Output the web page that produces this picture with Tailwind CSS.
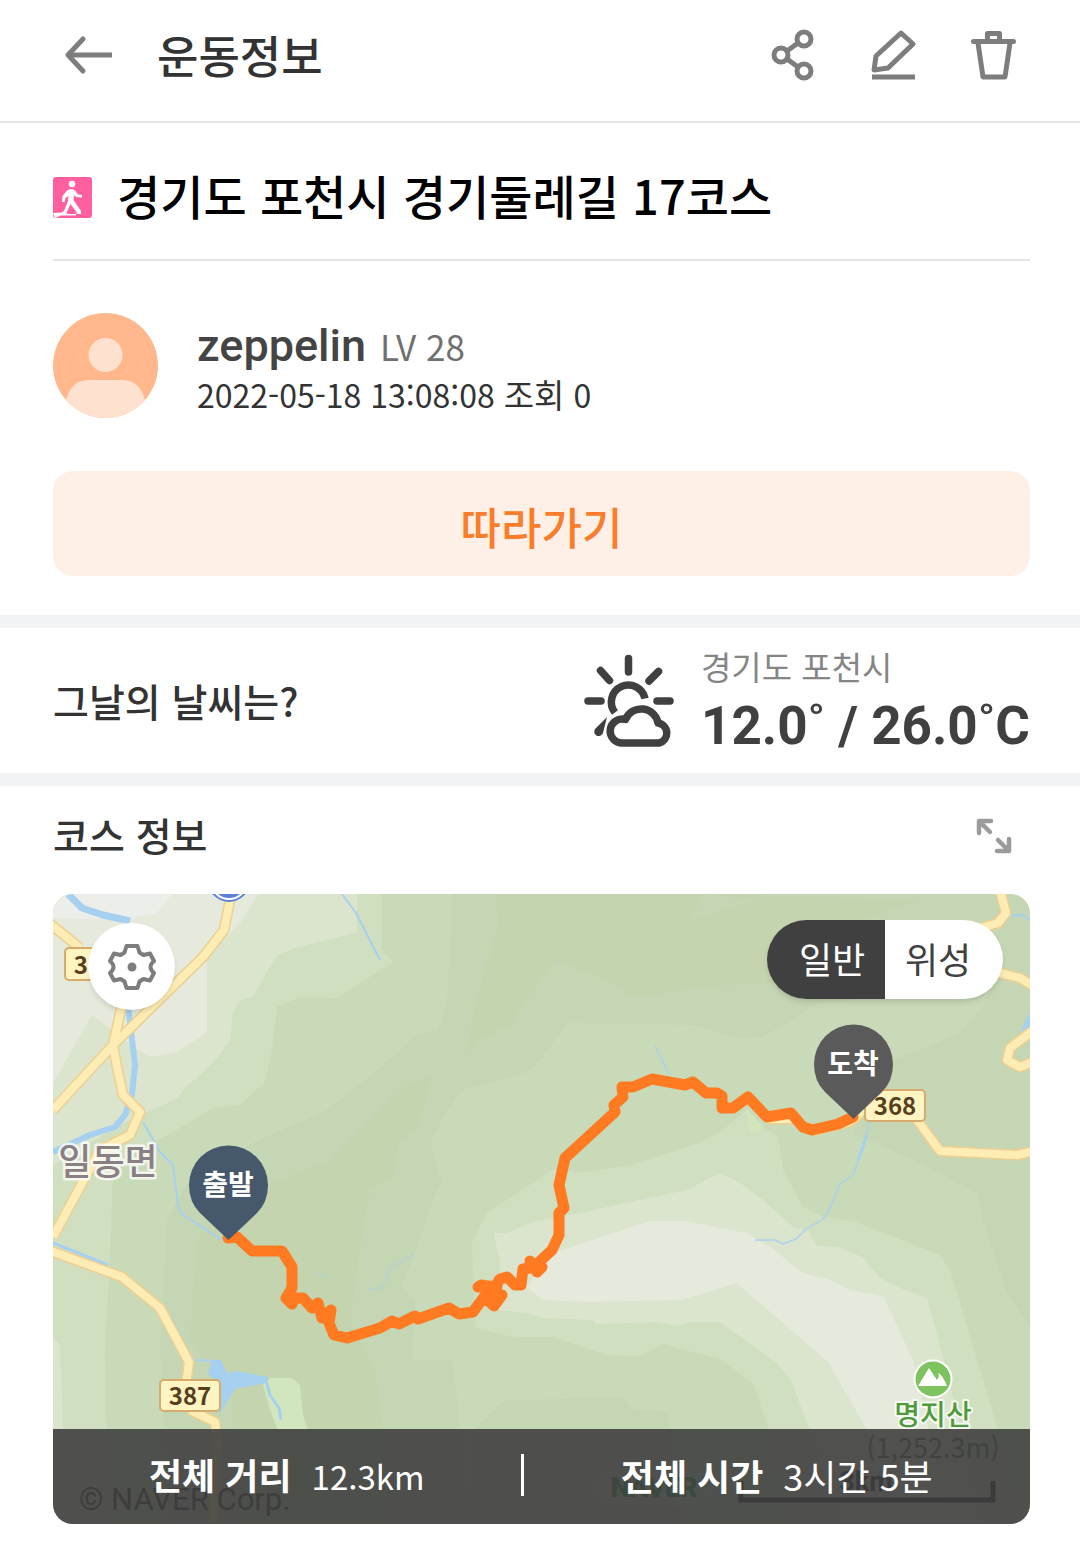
<!DOCTYPE html>
<html lang="ko">
<head>
<meta charset="UTF-8" />
<meta name="viewport" content="width=device-width, initial-scale=1" />
<title>운동정보</title>
<script src="https://cdn.jsdelivr.net/npm/@tailwindcss/browser@4"></script>
</head>
<body class="bg-white text-[#333] font-['Noto_Sans_CJK_KR',sans-serif]">

<header class="flex items-center h-[123px] pl-[64px] pr-[58px] pb-3 border-b-2 border-[#e5e5e5]">
  <button aria-label="뒤로" class="shrink-0">
    <svg class="w-12 h-12" viewBox="0 0 48 48" fill="none" stroke="#7d7d7d" stroke-width="5" stroke-linejoin="round">
      <path d="M48 24H4" /><path d="M19 8L4 24l15 16" stroke-linecap="round" />
    </svg>
  </button>
  <h1 class="ml-[45px] text-[45px] leading-[56px] font-medium">운동정보</h1>
  <div class="ml-auto flex gap-[44px]">
    <button aria-label="공유">
      <svg class="w-14 h-14" viewBox="0 0 56 56" fill="none" stroke="#7d7d7d" stroke-width="5">
        <circle cx="38" cy="12" r="7" /><circle cx="15" cy="28" r="7" /><circle cx="38" cy="44" r="7" />
        <path d="M32 16L21 24M21 32l11 8" />
      </svg>
    </button>
    <button aria-label="수정">
      <svg class="w-14 h-14" viewBox="0 0 56 56" fill="none" stroke="#7d7d7d" stroke-width="5" stroke-linejoin="round">
        <path d="M35 6L47 17L22 41L8 43L10 29Z" /><path d="M6 50h43" />
      </svg>
    </button>
    <button aria-label="삭제">
      <svg class="w-14 h-14" viewBox="0 0 56 56" fill="none" stroke="#7d7d7d" stroke-width="5" stroke-linejoin="round">
        <path d="M7.500 14.500h40" stroke-linecap="round" /><path d="M21.500 14V6.500h12V14M12 16l5 34h22l5-34" />
      </svg>
    </button>
  </div>
</header>

<main>
  <section class="pl-[53px] pr-[50px] pb-[39px]">
    <div class="flex items-center gap-[25px] h-[138px] pt-3 border-b-2 border-[#e5e5e5]">
      <svg class="w-[39px] h-[41px] shrink-0" viewBox="0 0 39 41" fill="#fff" role="img" aria-label="걷기">
        <rect width="39" height="41" rx="3" fill="#ff5f9e" />
        <circle cx="19" cy="7" r="3.300" />
        <path d="M14 13.500q4-3 8 0l3 4 4 .5v2.500l-6-.5-2-2-.5 5L28 34v3h-4.500v-2l-6-8L13 37H9v-2l2-1 4-10 .5-5-3 2-1 4H9l.5-6z" />
        <path d="M0 36l9-.5 7 1.500h7v1.500H8L2 41z" />
      </svg>
      <h2 class="pb-1 text-[47px] leading-[60px] font-medium text-black">경기도 포천시 경기둘레길 17코스</h2>
    </div>

    <div class="flex items-center gap-[39px] mt-[52px]">
      <svg class="w-[105px] h-[105px] rounded-full shrink-0" viewBox="0 0 105 105" role="img" aria-label="프로필">
        <rect width="105" height="105" fill="#ffb78b" />
        <circle cx="52.500" cy="42" r="17" fill="#ffe1cf" />
        <path d="M12 105V92q4-25 24-25h33q20 0 24 25v13z" fill="#ffe1cf" />
      </svg>
      <div class="pt-1">
        <p class="flex items-baseline gap-[14px] leading-[52px]">
          <span class="text-[45px] font-medium text-[#444] font-[Roboto,sans-serif]">zeppelin</span>
          <span class="text-[35px] text-[#707070]">LV 28</span>
        </p>
        <p class="text-[32px] leading-[44px]">2022-05-18 13:08:08 <span class="text-[33px]">조회</span> 0</p>
      </div>
    </div>

    <button class="block w-full h-[105px] mt-[53px] pt-1 rounded-[20px] bg-[#fff0e7] text-[#f97d2a] text-[44px] font-medium">따라가기</button>
  </section>

  <section class="flex items-center h-[171px] pl-[53px] pr-[50px] border-y-[13px] border-[#f1f3f5]">
    <h3 class="text-[39px] font-medium">그날의 날씨는?</h3>
    <svg class="w-[90px] h-[94px] ml-auto mr-[27px] shrink-0" viewBox="0 0 90 94" fill="none" stroke="#404040" stroke-width="7.500" stroke-linecap="round" role="img" aria-label="구름 조금">
      <path d="M44.500 4.500v13.500M16.500 16.500l9 10M74.500 17.500l-9.500 9.500M4 47h13M73 47h13" />
      <path d="M31 58.500a17 17 0 1 1 30-14" stroke-linecap="butt" />
      <path d="M39 89a12 12 0 1 1 2.500-23.500a17 17 0 0 1 32.500 3.500A10.200 10.200 0 0 1 75 89z" stroke-linejoin="round" />
      <path d="M23 63l-11 11a4.500 4.500 0 1 0 7 5z" fill="#404040" stroke="none" />
    </svg>
    <div>
      <p class="text-[33px] leading-[50px] text-[#858585]">경기도 포천시</p>
      <p class="text-[53px] leading-[70px] font-bold text-[#404040] font-[Roboto,sans-serif]">12.0˚ / 26.0˚C</p>
    </div>
  </section>

  <section class="pl-[53px] pr-[50px] pb-5">
    <div class="flex items-center h-[108px] pr-[18px] pb-3">
      <h3 class="text-[39px] font-medium">코스 정보</h3>
      <button aria-label="지도 확대" class="ml-auto pt-1">
        <svg class="w-9 h-9" viewBox="0 0 36 36" fill="none" stroke="#9b9b9b" stroke-width="4.500" stroke-linecap="round" stroke-linejoin="round">
          <path d="M3 15V3h12M4 4l10 10M33 21v12H21M32 32L22 22" />
        </svg>
      </button>
    </div>

    <div class="relative h-[630px] rounded-[20px] overflow-hidden bg-[#c8dab8]">
      <svg class="w-full h-full" viewBox="53 894 977 630" preserveAspectRatio="xMidYMid slice" role="img" aria-label="코스 지도">
        <!-- terrain -->
        <path fill="#d1dfc1" d="M53 894H382V951L393 962L337 998L300 997L277 1007L272 1050L265 1082L240 1105L213 1108L173 1132L130 1155L113 1170L110 1253L105 1350L108 1524H53Z" />
        <path fill="#dbe5ce" d="M53 894H357V932L320 942L297 947L278 955L268 970L253 997L240 1000L233 1013L230 1040L217 1058L197 1078L185 1087L178 1098L145 1113L120 1125L53 1165Z" />
        <path fill="#dbe5ce" d="M53 1338L60 1345L63 1430H53Z" />
        <path fill="#e5eadc" d="M53 894H258L240 923L207 957V1032L177 1052L150 1057L135 1048L92 1015L53 1083Z" />
        <path fill="#eceee9" d="M53 894H172L157 913L120 920L53 918Z" />
        <path fill="#c5d6b4" d="M452 894L447 1003L437 1030L415 1036L380 1068L327 1110L253 1143L187 1183L167 1220L160 1350L170 1524H470L453 1360H413L415 1300L402 1287L415 1253L433 1200L442 1180L430 1143L447 1110L463 1090L527 1072L543 1057L567 1023L693 1025L740 1038L763 1037L820 1003L992 985L983 1007L960 1033L920 1050L887 1062L853 1133L920 1163L977 1193L983 1220L1007 1293L1030 1327V894Z" />
        <path fill="#c3d4ae" d="M497 894L498 930L488 960L475 1003L467 1055L483 1038L513 1023L520 1007L557 960L622 987L627 998L720 985L790 983L860 920L920 900L720 894Z" />
        <path fill="#c5d6b4" d="M705 894L690 920L760 900Z" />
        <path fill="#c3d4ae" d="M432 1078L417 1130L400 1140L393 1177L370 1190L360 1250L350 1320L375 1370L395 1524H235L233 1400L190 1340L197 1240L230 1200L330 1160L380 1110L410 1082Z" />
        <path fill="#c5d6b4" d="M474 1430L505 1400L625 1398L633 1410L667 1411L670 1430L680 1524H470Z" />
        <path fill="#d1dfc1" d="M720 1132L700 1143L627 1166L583 1172L553 1170L487 1213L472 1243L475 1328L513 1337H553L607 1355L640 1356L663 1344L720 1359L753 1383L769 1430L790 1524H1025L998 1430L950 1270L940 1255L853 1221L823 1217L803 1207L783 1170L778 1137L763 1127L747 1110Z" />
        <path fill="#dbe5ce" d="M720 1173L687 1190L630 1202L580 1213L533 1222L507 1233H494L500 1263L497 1310L527 1313L543 1318L593 1320L597 1324L657 1322L677 1326L690 1322L720 1322L777 1363L791 1380L810 1430L840 1524H985L943 1357L927 1298L900 1288L880 1278L862 1257L838 1247L817 1246L808 1230L793 1227L763 1200L740 1183Z" />
        <path fill="#e5eadc" d="M553 1253L650 1221H687L720 1228L747 1233L770 1247L803 1273L830 1280L850 1290L883 1296L913 1360L950 1524H900L867 1430L828 1362L737 1283L680 1300L587 1302L543 1300L527 1287Z" />
        <path fill="#d2e6be" d="M263 1385L270 1378H292L300 1385L303 1415L308 1430H278L270 1410Z" />
        <path fill="#d2e6be" d="M746 1108L762 1125L758 1132L750 1133Z" />

        <!-- water -->
        <g fill="none" stroke="#a5d0f0" stroke-linejoin="round">
          <path stroke-width="7" d="M68 894L82 908L103 915L130 921" />
          <path stroke-width="6" d="M128 1005L135 1065L132 1095L125 1115L115 1127L90 1135L53 1152" />
          <path stroke-width="2" d="M342 894L356 913L380 960M143 1122L160 1152L173 1165L178 1205L182 1214L222 1240M195 1360L220 1361" />
          <path stroke-width="2" opacity=".7" d="M655 1046L669 1074M870 1122L863 1147L853 1175L840 1184L828 1212L823 1219L805 1230L796 1239L783 1244L775 1240H755" />
          <path stroke-width="2" opacity=".4" d="M317 1273L330 1277M368 1289L382 1288L390 1268L415 1254" />
          <path stroke-width="3" d="M53 1243L108 1265M170 1317L180 1336M265 1377L270 1395L279 1408L281 1420" />
          <path stroke-width="3" d="M867 1135L858 1160" />
          <path stroke-width="2" d="M1008 916L1022 915L1030 920" />
        </g>
        <path fill="#a5d0f0" d="M212 1361L221 1360L227 1373L237 1371L268 1377L266 1383L235 1389L219 1415L221 1385L208 1374Z" />
        <path fill="#a5d0f0" d="M1030 1012L1020 1032L1030 1028Z" />

        <!-- roads -->
        <g fill="none" stroke-linejoin="round">
          <path stroke="#eecf91" stroke-width="11" d="M230 900L224 930L203 957L113 1045L53 1110M122 1005L113 1045L117 1067L123 1095L140 1112L130 1135L100 1150L53 1237M48 922L80 948M48 1250L122 1277L160 1308L189 1362L186 1385M190 1410L215 1422L217 1440L213 1530M1000 890L1006 913L998 923L980 928M1000 973L1020 978L1035 987M1035 1029L1010 1048L1007 1060L1020 1067L1035 1061M915 1117L940 1151L1017 1155L1035 1151M767 1119L800 1119M812 1131L850 1122L866 1108" />
          <path stroke="#fdecb3" stroke-width="8" d="M230 900L224 930L203 957L113 1045L53 1110M122 1005L113 1045L117 1067L123 1095L140 1112L130 1135L100 1150L53 1237M48 922L80 948M48 1250L122 1277L160 1308L189 1362L186 1385M190 1410L215 1422L217 1440L213 1530M1000 890L1006 913L998 923L980 928M1000 973L1020 978L1035 987M1035 1029L1010 1048L1007 1060L1020 1067L1035 1061M915 1117L940 1151L1017 1155L1035 1151M767 1119L800 1119M812 1131L850 1122L866 1108" />
        </g>
        <circle cx="229" cy="881" r="20" fill="#5c7fd6" stroke="#5c7fd6" stroke-width="2" />
        <circle cx="229" cy="881" r="18" fill="#5c7fd6" stroke="#fff" stroke-width="2" />

        <!-- road numbers -->
        <g fill="#fff4c2" stroke="#d6ab6b" stroke-width="2">
          <rect x="65" y="948" width="60" height="32" rx="4" />
          <rect x="160" y="1380" width="60" height="31" rx="4" />
          <rect x="865" y="1090" width="60" height="31" rx="4" />
        </g>
        <g fill="#553f1e" font-size="24" font-weight="700" text-anchor="middle">
          <text x="95" y="974">387</text>
          <text x="190" y="1405">387</text>
          <text x="895" y="1115">368</text>
        </g>

        <text x="108" y="1175" font-size="36" font-weight="500" text-anchor="middle" fill="#8a8084" stroke="#fff" stroke-opacity=".75" stroke-width="5" stroke-linejoin="round" paint-order="stroke">일동면</text>
        <circle cx="933" cy="1379" r="18.500" fill="#7dc35f" stroke="#fff" stroke-width="2" />
        <path fill="#fff" d="M918 1386L929 1368L937 1380Q940 1376 938 1373Q942 1374 947 1386Z" />
        <g fill="#4f9a3a" stroke="#fff" stroke-opacity=".8" stroke-linejoin="round" paint-order="stroke" text-anchor="middle">
          <text x="933" y="1425" font-size="28" font-weight="500" stroke-width="4">명지산</text>
          <text x="933" y="1458" font-size="27" fill="#2f6b22" stroke="none">(1,252.3m)</text>
        </g>

        <!-- attribution and scale -->
        <text x="79" y="1510" font-size="31" fill="#222" class="font-[Roboto,sans-serif]">© NAVER Corp.</text>
        <rect x="594" y="1469" width="119" height="38" rx="19" fill="#fff" opacity=".3" />
        <text x="654" y="1497" font-size="27" font-weight="900" text-anchor="middle" fill="#008a30" class="font-[Roboto,sans-serif]">NAVER</text>
        <text x="866" y="1491" font-size="27" font-weight="700" text-anchor="middle" fill="#111" class="font-[Roboto,sans-serif]">3km</text>
        <path d="M741 1481V1500H993V1481" fill="none" stroke="#111" stroke-width="5" />

        <!-- course track -->
        <path fill="none" stroke="#ff7a21" stroke-width="11" stroke-linejoin="round" stroke-linecap="round" d="M228 1238L237 1237L252 1251H282L292 1267V1288L286 1298L292 1304L295 1298H303L312 1308L318 1303L322 1318L331 1310L329 1323L334 1335L347 1338L380 1328L392 1321L399 1324L415 1316L418 1319L449 1308L459 1314L473 1312L484 1297L494 1306L502 1295L486 1296L497 1287L478 1287L481 1285L495 1287L500 1279L507 1277L515 1285H521L523 1269L530 1268V1261L537 1272L542 1267L538 1263L552 1250L559 1235V1213L564 1208L559 1185L565 1158L615 1112L614 1105L623 1097L622 1087H633L652 1079L685 1085L693 1082L706 1093H717L722 1096V1108H733L748 1097L767 1117L791 1113L803 1127L812 1130L838 1124L853 1117" />

        <!-- start / finish pins -->
        <path fill="#46586b" d="M228.500 1240L200 1213Q189 1202 189 1185A39.500 39.500 0 0 1 268 1185Q268 1202 257 1213Z" />
        <path fill="#5a5a5a" d="M853.500 1119L825 1092Q814 1081 814 1064A39.500 39.500 0 0 1 893 1064Q893 1081 882 1092Z" />
        <g fill="#fff" font-size="28" font-weight="700" text-anchor="middle">
          <text x="228" y="1195">출발</text>
          <text x="853" y="1074">도착</text>
        </g>
      </svg>

      <button aria-label="지도 설정" class="absolute left-[35px] top-[29px] w-[87px] h-[87px] rounded-full bg-white shadow-md flex items-center justify-center">
        <svg class="w-12 h-12" viewBox="0 0 48 48" fill="none" stroke="#7d7d7d" stroke-width="4" stroke-linejoin="round">
          <path d="M18.500 3h11L31.500 9.500L35.500 12L42 10.500L46 18Q39 24 46 30L42 37.500L35.500 36L31.500 38.500L29.500 45h-11L16.500 38.500L12.500 36L6 37.500L2 30Q9 24 2 18L6 10.500L12.500 12L16.500 9.500Z" />
          <circle cx="24" cy="24" r="4.500" fill="#7d7d7d" stroke="none" />
        </svg>
      </button>

      <div class="absolute right-[27px] top-[26px] flex h-[79px] rounded-full overflow-hidden shadow-md text-[36px]">
        <button class="w-[118px] pl-3 pb-1 bg-[#404040] text-white">일반</button>
        <button class="w-[118px] pr-3 pb-1 bg-white text-[#404040]">위성</button>
      </div>

      <div class="absolute inset-x-0 bottom-0 h-[95px] pb-1 grid grid-cols-[12fr_auto_13fr] items-center bg-[#404040]/90 text-white text-[36px]">
        <p class="flex items-baseline justify-center gap-5"><span class="font-bold">전체 거리</span><span class="text-[33px]">12.3km</span></p>
        <span class="w-[3px] h-[42px] bg-white"></span>
        <p class="flex items-baseline justify-center gap-5"><span class="font-bold">전체 시간</span><span>3시간 5분</span></p>
      </div>
    </div>
  </section>
</main>

</body>
</html>
